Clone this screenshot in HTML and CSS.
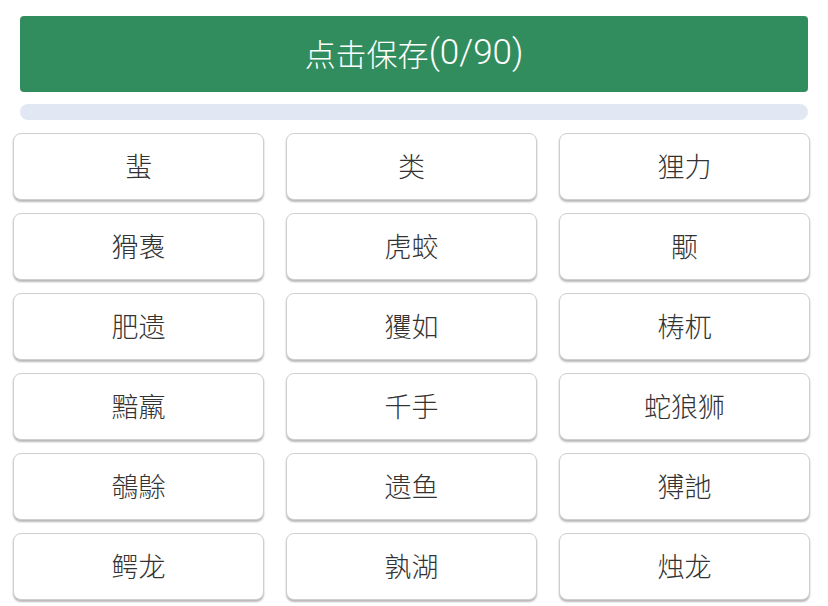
FILE: index.html
```html
<!DOCTYPE html>
<html lang="zh">
<head>
<meta charset="utf-8">
<link rel="stylesheet" href="styles.css">
</head>
<body>
<div class="page">
  <div class="top">
    <button class="save">点击保存<span class="count">(0/90)</span></button>
    <div class="progress"><div class="fill"></div></div>
  </div>
  <div class="grid">
    <div class="card">蜚</div>
    <div class="card">类</div>
    <div class="card">狸力</div>
    <div class="card">猾褢</div>
    <div class="card">虎蛟</div>
    <div class="card">颙</div>
    <div class="card">肥遗</div>
    <div class="card">玃如</div>
    <div class="card">梼杌</div>
    <div class="card">黯羸</div>
    <div class="card">千手</div>
    <div class="card">蛇狼狮</div>
    <div class="card">鵸鵌</div>
    <div class="card">遗鱼</div>
    <div class="card">猼訑</div>
    <div class="card">鳄龙</div>
    <div class="card">孰湖</div>
    <div class="card">烛龙</div>
  </div>
</div>
</body>
</html>
```

FILE: styles.css
```css
html, body {
  margin: 0;
  padding: 0;
  background: #ffffff;
}
body {
  font-family: Roboto, "Noto Sans CJK SC", "Noto Sans", sans-serif;
}
.page {
  width: 828px;
  height: 606px;
  overflow: hidden;
}
.top {
  padding: 16px 20px 0 20px;
}
.save {
  display: flex;
  align-items: center;
  justify-content: center;
  width: 100%;
  height: 76px;
  border: none;
  border-radius: 4px;
  background: #328d5e;
  color: #ffffff;
  font-family: Roboto, "Noto Sans CJK SC", sans-serif;
  font-size: 31px;
  font-weight: 300;
  padding: 0 0 4px 0;
  margin: 0;
}
.count {
  font-size: 35px;
  font-weight: 300;
}
.progress {
  margin-top: 12px;
  height: 16px;
  border-radius: 8px;
  background: #e2e8f3;
}
.fill {
  width: 0;
  height: 100%;
}
.grid {
  display: grid;
  grid-template-columns: repeat(3, 251px);
  column-gap: 22px;
  row-gap: 13px;
  padding: 13px 0 0 13px;
}
.card {
  height: 67px;
  box-sizing: border-box;
  border: 1px solid #cfcfcf;
  border-radius: 8px;
  box-shadow: 0 2px 2px rgba(0, 0, 0, 0.28);
  background: #ffffff;
  display: flex;
  align-items: center;
  justify-content: center;
  font-size: 27px;
  font-weight: 300;
  color: #333333;
  padding-bottom: 2px;
}
```
